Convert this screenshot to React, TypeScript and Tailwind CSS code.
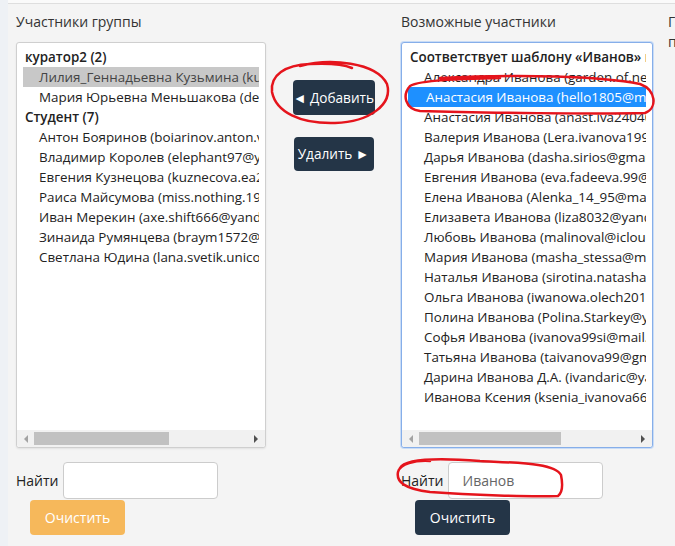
import React from "react";

const groupMembers = [
    {
        title: "куратор2 (2)",
        items: [
            { text: "Лилия_Геннадьевна Кузьмина (kuzmina.lilia@mail.ru)", selected: true },
            { text: "Мария Юрьевна Меньшакова (den.menshakova@mail.ru)" },
        ],
    },
    {
        title: "Студент (7)",
        items: [
            { text: "Антон Бояринов (boiarinov.anton.v@gmail.com)" },
            { text: "Владимир Королев (elephant97@yandex.ru)" },
            { text: "Евгения Кузнецова (kuznecova.ea2000@mail.ru)" },
            { text: "Раиса Майсумова (miss.nothing.1999@mail.ru)" },
            { text: "Иван Мерекин (axe.shift666@yandex.ru)" },
            { text: "Зинаида Румянцева (braym1572@mail.ru)" },
            { text: "Светлана Юдина (lana.svetik.unicorn@mail.ru)" },
        ],
    },
];

const candidates = [
    {
        title: "Соответствует шаблону «Иванов» и ещё не в группе",
        items: [
            { text: "Александра Иванова (garden.of.neverland@mail.ru)" },
            { text: "Анастасия Иванова (hello1805@mail.ru)", selected: true },
            { text: "Анастасия Иванова (anast.iva240400@mail.ru)" },
            { text: "Валерия Иванова (Lera.ivanova1999@mail.ru)" },
            { text: "Дарья Иванова (dasha.sirios@gmail.com)" },
            { text: "Евгения Иванова (eva.fadeeva.99@mail.ru)" },
            { text: "Елена Иванова (Alenka_14_95@mail.ru)" },
            { text: "Елизавета Иванова (liza8032@yandex.ru)" },
            { text: "Любовь Иванова (malinoval@icloud.com)" },
            { text: "Мария Иванова (masha_stessa@mail.ru)" },
            { text: "Наталья Иванова (sirotina.natasha2@mail.ru)" },
            { text: "Ольга Иванова (iwanowa.olech2016@mail.ru)" },
            { text: "Полина Иванова (Polina.Starkey@yandex.ru)" },
            { text: "Софья Иванова (ivanova99si@mail.ru)" },
            { text: "Татьяна Иванова (taivanova99@gmail.com)" },
            { text: "Дарина Иванова Д.А. (ivandaric@yandex.ru)" },
            { text: "Иванова Ксения (ksenia_ivanova66@mail.ru)" },
        ],
    },
];

type Group = { title: string; items: { text: string; selected?: boolean }[] };

const ListBox = ({
    groups,
    focused,
    selectColor,
    thumb,
}: {
    groups: Group[];
    focused?: boolean;
    selectColor: "gray" | "blue";
    thumb: string;
}) => {
    return (
        <div
            className={
                focused
                    ? "flex flex-col h-[406px] bg-white rounded-[3px] border border-[#86aee9] shadow-[0_0_0_1px_#c9dcf6]"
                    : "flex flex-col h-[406px] bg-white rounded-[3px] border border-[#cfcfcf] shadow-[0_1px_2px_rgba(0,0,0,0.08)]"
            }
        >
            <div className="flex-1 overflow-hidden pt-[4px] pl-[6px] pr-[6px] text-[13.4px]">
                {groups.map((g) => (
                    <div key={g.title}>
                        <div className="h-[20px] leading-[20px] pl-[2px] font-semibold text-[#222] whitespace-nowrap overflow-hidden">
                            {g.title}
                        </div>
                        {g.items.map((it, i) => (
                            <div
                                key={i}
                                className={
                                    it.selected
                                        ? selectColor === "blue"
                                            ? "h-[20px] leading-[20px] pl-[18px] whitespace-nowrap overflow-hidden bg-[#1e90ff] text-white"
                                            : "h-[20px] leading-[20px] pl-[16px] whitespace-nowrap overflow-hidden bg-[#c8c8c8] text-[#444]"
                                        : "h-[20px] leading-[20px] pl-[16px] whitespace-nowrap overflow-hidden text-[#222]"
                                }
                            >
                                {it.text}
                            </div>
                        ))}
                    </div>
                ))}
            </div>
            {/* horizontal scrollbar */}
            <div className="h-[17px] bg-[#f1f1f1] flex items-center px-[3px] rounded-b-[3px]">
                <span className="w-0 h-0 border-y-[4px] border-y-transparent border-r-[4px] border-r-[#a3a3a3] ml-[4px]" />
                <div className="flex-1 h-[13px] mx-[6px] flex">
                    <div className={`h-[13px] bg-[#c1c1c1] ${thumb}`} />
                </div>
                <span className="w-0 h-0 border-y-[4px] border-y-transparent border-l-[4px] border-l-[#505050] mr-[4px]" />
            </div>
        </div>
    );
};

const SearchRow = ({ value, buttonClass }: { value?: string; buttonClass: string }) => (
    <div className="mt-[14px]">
        <div className="flex items-center gap-[4px]">
            <span className="text-[#222]">Найти</span>
            <div className="w-[155px] h-[37px] bg-white border border-[#cccccc] rounded-[4px] flex items-center pl-[14px] text-[#666]">
                {value}
            </div>
        </div>
        <button className={`ml-[14px] mt-[1px] w-[95px] h-[35px] rounded-[4px] text-white ${buttonClass}`}>
            Очистить
        </button>
    </div>
);

export default function App() {
    return (
        <div className="relative flex w-[675px] h-[546px] overflow-hidden text-[14px] [font-family:'Open_Sans',sans-serif] text-[#333]">
            <div className="w-[8px] shrink-0 bg-[#eef1f5]" />
            <div className="flex-1 flex flex-col bg-[#f4f4f4]">
                <div className="h-[4px] shrink-0 bg-[#fafafa] border-b border-[#dedede]" />
                <div className="flex pl-[8px] pt-[8px] leading-[20px]">
                    {/* left column */}
                    <div className="w-[250px] shrink-0">
                        <div className="h-[20px] mb-[10px]">Участники группы</div>
                        <ListBox groups={groupMembers} selectColor="gray" thumb="w-[135px]" />
                        <SearchRow buttonClass="bg-[#f6b85b]" />
                    </div>

                    {/* middle buttons */}
                    <div className="w-[135px] shrink-0 flex flex-col items-center pt-[68px] gap-[22px]">
                        <button className="w-[82px] h-[35px] rounded-[4px] bg-[#243547] text-white whitespace-nowrap px-0 text-[13.6px] flex items-center justify-center">
                            ◄ Добавить
                        </button>
                        <button className="w-[80px] h-[34px] rounded-[4px] bg-[#243547] text-white whitespace-nowrap px-0 text-[13.6px] flex items-center justify-center">
                            Удалить ►
                        </button>
                    </div>

                    {/* right column */}
                    <div className="w-[252px] shrink-0">
                        <div className="h-[20px] mb-[10px]">Возможные участники</div>
                        <ListBox groups={candidates} focused selectColor="blue" thumb="w-[142px]" />
                        <SearchRow value="Иванов" buttonClass="bg-[#243547]" />
                    </div>

                    {/* third column, cut off */}
                    <div className="ml-[15px] w-[120px] shrink-0">Группы пользователей</div>
                </div>
            </div>

            {/* red hand-drawn marks */}
            <svg
                className="absolute inset-0 pointer-events-none"
                width="675"
                height="546"
                viewBox="0 0 675 546"
                fill="none"
                stroke="#e5141c"
                strokeWidth="2.5"
                strokeLinecap="round"
                strokeLinejoin="round"
            >
                <path d="M300 66 C330 58 376 62 387 84 C393 104 370 122 335 123 C300 124 276 112 272 92 C270 75 285 65 310 64 C330 63 345 65 352 68" />
                <path d="M440 78 C520 74 600 76 640 84 C656 90 658 108 645 113 C600 114 480 113 420 111 C405 109 402 95 410 86 C420 80 460 79 500 78" />
                <path d="M400 468 C405 458 440 458 480 461 C520 463 555 463 561 475 C563 485 562 493 558 496 C530 497 470 495 430 492 C405 489 396 482 398 472 C400 464 415 460 430 461" />
            </svg>
        </div>
    );
}
